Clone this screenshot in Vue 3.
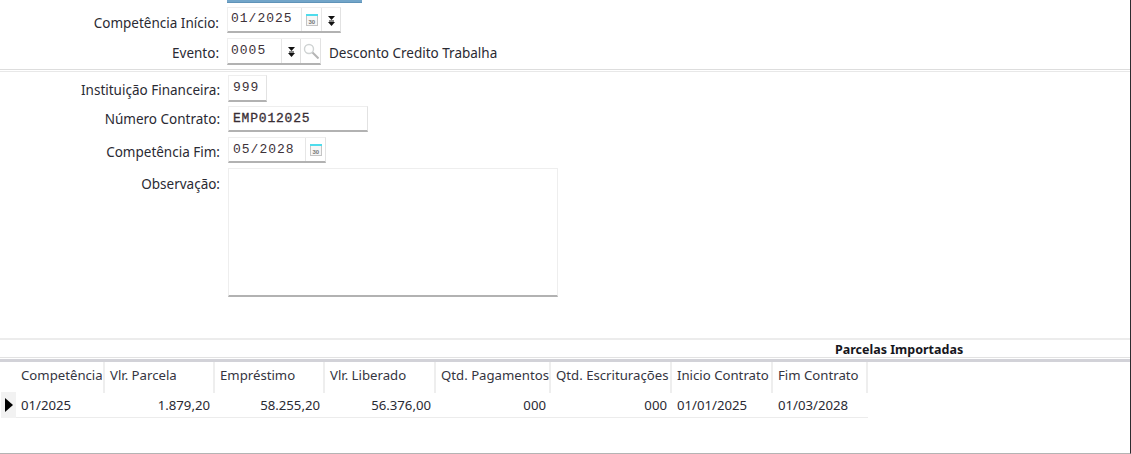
<script setup>
const columns = [
  { title: 'Competência', width: 89, value: '01/2025', align: 'left' },
  { title: 'Vlr. Parcela', width: 110, value: '1.879,20', align: 'right' },
  { title: 'Empréstimo', width: 110, value: '58.255,20', align: 'right' },
  { title: 'Vlr. Liberado', width: 111, value: '56.376,00', align: 'right' },
  { title: 'Qtd. Pagamentos', width: 115, value: '000', align: 'right' },
  { title: 'Qtd. Escriturações', width: 121, value: '000', align: 'right' },
  { title: 'Inicio Contrato', width: 101, value: '01/01/2025', align: 'left' },
  { title: 'Fim Contrato', width: 95, value: '01/03/2028', align: 'left' },
]
</script>

<template>
  <div class="screen">
    <div class="form top">
      <div class="sliver"></div>
      <div class="row r1">
        <label class="lb8">Competência Início:</label>
        <div class="field w114">
          <span class="val grow">01/2025</span>
          <span class="cell cal"><svg width="14" height="14" viewBox="0 0 14 14"><rect x="1.5" y="2.5" width="11" height="10" fill="#f6f6f6" stroke="#c4c4c4"/><rect x="1" y="1" width="12" height="2" fill="#4fdcec"/><text x="3.5" y="10.5" class="calnum">30</text></svg></span>
          <span class="cell spin"><svg class="spinicon" width="7" height="10" viewBox="0 0 7 10"><path d="M0 0h7L3.5 4zM1 4.500h5v1H1zM0 6h7L3.5 10z" fill="#111"/></svg></span>
        </div>
      </div>
      <div class="row r2">
        <label class="lb7">Evento:</label>
        <div class="field w94">
          <span class="val grow">0005</span>
          <span class="cell spin"><svg class="spinicon" width="7" height="10" viewBox="0 0 7 10"><path d="M0 0h7L3.5 4zM1 4.500h5v1H1zM0 6h7L3.5 10z" fill="#111"/></svg></span>
          <span class="cell lens"><svg width="16" height="16" viewBox="0 0 16 16"><circle cx="6" cy="6" r="4.500" fill="none" stroke="#cfd3d3" stroke-width="1.400"/><path d="M9.500 9.500l6 6" stroke="#b5b5b5" stroke-width="2"/></svg></span>
        </div>
        <span class="desc">Desconto Credito Trabalha</span>
      </div>
    </div>
    <div class="divider"></div>
    <div class="form lower">
      <div class="row">
        <label class="lb7">Instituição Financeira:</label>
        <div class="field w39 h27"><span class="val p4">999</span></div>
      </div>
      <div class="row">
        <label class="lb5">Número Contrato:</label>
        <div class="field w140"><span class="val p4 strong">EMP012025</span></div>
      </div>
      <div class="row">
        <label class="lb7">Competência Fim:</label>
        <div class="field w98">
          <span class="val p4 grow">05/2028</span>
          <span class="cell cal"><svg width="14" height="14" viewBox="0 0 14 14"><rect x="1.5" y="2.5" width="11" height="10" fill="#f6f6f6" stroke="#c4c4c4"/><rect x="1" y="1" width="12" height="2" fill="#4fdcec"/><text x="3.5" y="10.5" class="calnum">30</text></svg></span>
        </div>
      </div>
      <div class="row obs">
        <label class="lb8">Observação:</label>
        <div class="area"></div>
      </div>
    </div>
    <div class="section">
      <div class="title">Parcelas Importadas</div>
      <div class="rule"></div>
    </div>
    <div class="grid">
      <div class="gutter">
        <div class="gutter-head"></div>
        <div class="gutter-cell"><svg width="8" height="14" viewBox="0 0 8 14"><path d="M0 0l8 7-8 7z" fill="#000"/></svg></div>
      </div>
      <div v-for="col in columns" :key="col.title" class="col" :style="{ width: col.width + 'px' }">
        <div class="head">{{ col.title }}</div>
        <div class="data" :class="col.align">{{ col.value }}</div>
      </div>
    </div>
  </div>
</template>

<style>
html, body { margin: 0; background: #fff; overflow: hidden; }
</style>

<style scoped>
.screen {
  width: 1131px;
  height: 454px;
  box-sizing: border-box;
  background: #fff;
  border-right: 1px solid #2c2c30;
  border-bottom: 1px solid #b4b4b4;
  font-family: "Noto Sans", "Open Sans", sans-serif;
  font-size: 13.5px;
  color: #2a2a33;
  overflow: hidden;
}
.sliver {
  width: 135px;
  height: 3px;
  margin-left: 227px;
  box-sizing: border-box;
  background: #72a5c9;
  border-bottom: 1px solid #5f93b8;
}
.row { display: flex; align-items: flex-start; }
.row label {
  flex: none;
  text-align: right;
  line-height: 17px;
  white-space: nowrap;
}
.top .row label { width: 219px; margin-right: 8px; }
.lower .row label { width: 220px; margin-right: 8px; }
.lb5 { padding-top: 5px; }
.lb7 { padding-top: 7px; }
.lb8 { padding-top: 8px; }
.r1 { margin-top: 4px; }
.r2 { margin-top: 5px; }
.field {
  display: flex;
  box-sizing: border-box;
  height: 26px;
  background: #fff;
  border: 1px solid #eeeeee;
  border-bottom: 2px solid #b2b2b2;
  border-right-color: #e2e2e2;
  flex: none;
}
.r2 .field { height: 27px; }
.w114 { width: 114px; }
.w94 { width: 94px; }
.w39 { width: 39px; }
.w140 { width: 140px; }
.w98 { width: 98px; }
.h27 { height: 27px; }
.val {
  font-family: "Liberation Mono", monospace;
  font-size: 13px;
  color: #3d3239;
  padding: 4px 0 0 3px;
  line-height: 13px;
  letter-spacing: 1px;
  white-space: nowrap;
}
.r2 .val, .p4 { padding-top: 5px; }
.p4 { padding-left: 4px; }
.strong { -webkit-text-stroke: 0.3px #33292f; letter-spacing: 0.8px; }
.grow { flex: 1; }
.cell {
  display: flex;
  align-items: center;
  justify-content: center;
  flex: none;
  box-sizing: border-box;
  border-left: 1px solid #e6e6e6;
}
.cal { width: 20px; }
.spin { width: 19px; }
.spinicon { margin-top: 2px; }
.lens { width: 20px; border-left: 1px solid #e0e0e0; }
.calnum { font-size: 6px; font-family: "Liberation Sans", sans-serif; fill: #777; font-weight: 700; }
.desc { margin-left: 8px; padding-top: 7px; line-height: 17px; }
.divider {
  height: 1px;
  margin-top: 4px;
  margin-bottom: 3px;
  border-top: 1px solid #dddddd;
  border-bottom: 1px solid #e8e8e8;
}
.lower { display: flex; flex-direction: column; gap: 4px; }
.lower .row { height: 27px; }
.lower .row:nth-child(2) .field, .lower .row:nth-child(3) .field { height: 26px; }
.lower .obs { height: 129px; }
.area {
  width: 330px;
  height: 129px;
  box-sizing: border-box;
  background: #fff;
  border: 1px solid #eeeeee;
  border-bottom: 2px solid #b2b2b2;
}
.section {
  margin-top: 41px;
  height: 24px;
  box-sizing: border-box;
  border-top: 2px solid #ececec;
  border-bottom: 3px solid #d2d2d8;
}
.title {
  width: 128px;
  height: 17px;
  margin-left: 835px;
  font-weight: 700;
  line-height: 20px;
  font-size: 12.5px;
  color: #16161c;
  white-space: nowrap;
}
.rule { height: 1px; background: #e2e2e2; }
.grid { display: flex; font-size: 13.2px; }
.gutter { width: 16px; flex: none; }
.gutter-head { height: 30px; }
.gutter-cell {
  height: 26px;
  margin-left: 1px;
  background: #f2f2f2;
  display: flex;
  align-items: center;
  justify-content: center;
}
.col { flex: none; box-sizing: border-box; }
.head {
  height: 31px;
  line-height: 27px;
  padding-left: 5px;
  box-sizing: border-box;
  border-right: 2px solid #eeeeee;
  white-space: nowrap;
  overflow: hidden;
  color: #35353f;
}
.data {
  height: 25px;
  line-height: 25px;
  box-sizing: border-box;
  border-bottom: 1px solid #ececec;
  padding: 0 5px;
  white-space: nowrap;
}
.right { text-align: right; padding-right: 5px; }
.left { text-align: left; }
</style>
